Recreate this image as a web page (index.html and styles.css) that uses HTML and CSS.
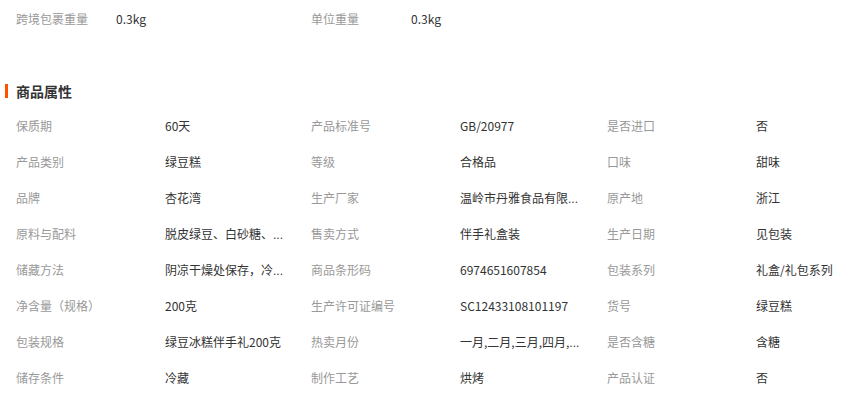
FILE: index.html
```html
<!DOCTYPE html>
<html lang="zh-CN">
<head>
  <meta charset="UTF-8" />
  <title>商品属性</title>
  <link rel="stylesheet" href="styles.css">
</head>
<body>

<div class="extra">
  <div class="pair"><span class="k">跨境包裹重量</span><span class="v">0.3kg</span></div>
  <div class="pair"><span class="k">单位重量</span><span class="v">0.3kg</span></div>
</div>

<h3 class="title">商品属性</h3>

<div class="attrs">
  <div class="row">
    <span class="k">保质期</span><span class="v">60天</span>
    <span class="k">产品标准号</span><span class="v">GB/20977</span>
    <span class="k">是否进口</span><span class="v">否</span>
  </div>
  <div class="row">
    <span class="k">产品类别</span><span class="v">绿豆糕</span>
    <span class="k">等级</span><span class="v">合格品</span>
    <span class="k">口味</span><span class="v">甜味</span>
  </div>
  <div class="row">
    <span class="k">品牌</span><span class="v">杏花湾</span>
    <span class="k">生产厂家</span><span class="v" title="温岭市丹雅食品有限公司">温岭市丹雅食品有限<i class="dots">...</i></span>
    <span class="k">原产地</span><span class="v">浙江</span>
  </div>
  <div class="row">
    <span class="k">原料与配料</span><span class="v" title="脱皮绿豆、白砂糖、麦芽糖">脱皮绿豆、白砂糖、<i class="dots">...</i></span>
    <span class="k">售卖方式</span><span class="v">伴手礼盒装</span>
    <span class="k">生产日期</span><span class="v">见包装</span>
  </div>
  <div class="row">
    <span class="k">储藏方法</span><span class="v" title="阴凉干燥处保存，冷藏更佳">阴凉干燥处保存，冷<i class="dots">...</i></span>
    <span class="k">商品条形码</span><span class="v">6974651607854</span>
    <span class="k">包装系列</span><span class="v">礼盒/礼包系列</span>
  </div>
  <div class="row">
    <span class="k">净含量（规格）</span><span class="v">200克</span>
    <span class="k">生产许可证编号</span><span class="v">SC12433108101197</span>
    <span class="k">货号</span><span class="v">绿豆糕</span>
  </div>
  <div class="row">
    <span class="k">包装规格</span><span class="v">绿豆冰糕伴手礼200克</span>
    <span class="k">热卖月份</span><span class="v" title="一月,二月,三月,四月,五月,六月">一月,二月,三月,四月,<i class="dots">...</i></span>
    <span class="k">是否含糖</span><span class="v">含糖</span>
  </div>
  <div class="row">
    <span class="k">储存条件</span><span class="v">冷藏</span>
    <span class="k">制作工艺</span><span class="v">烘烤</span>
    <span class="k">产品认证</span><span class="v">否</span>
  </div>
</div>

</body>
</html>
```

FILE: styles.css
```css
body {
  margin: 0;
  background: #fff;
  font-family: "Noto Sans CJK SC", "Liberation Sans", sans-serif;
  font-size: 12px;
  color: #333;
}

.k {
  color: #999;
}

.v {
  color: #333;
  white-space: nowrap;
}

.dots {
  font-style: normal;
  font-family: "Liberation Sans", sans-serif;
  font-size: 12px;
}

.extra {
  display: flex;
  height: 38px;
  line-height: 38px;
  padding-left: 16px;
}

.extra .pair {
  width: 295px;
  display: flex;
}

.extra .k {
  width: 100px;
}

.title {
  margin: 43px 0 0 5px;
  height: 20px;
  line-height: 20px;
  font-size: 14px;
  font-weight: bold;
  color: #333;
  display: flex;
  align-items: center;
  gap: 8px;
}

.title::before {
  content: "";
  width: 3px;
  height: 14px;
  background: #ff5000;
}

.attrs {
  margin-top: 7px;
  padding-left: 16px;
}

.row {
  display: grid;
  grid-template-columns: 149px 146px 149px 147px 149px 1fr;
  height: 36px;
  line-height: 36px;
}
```
